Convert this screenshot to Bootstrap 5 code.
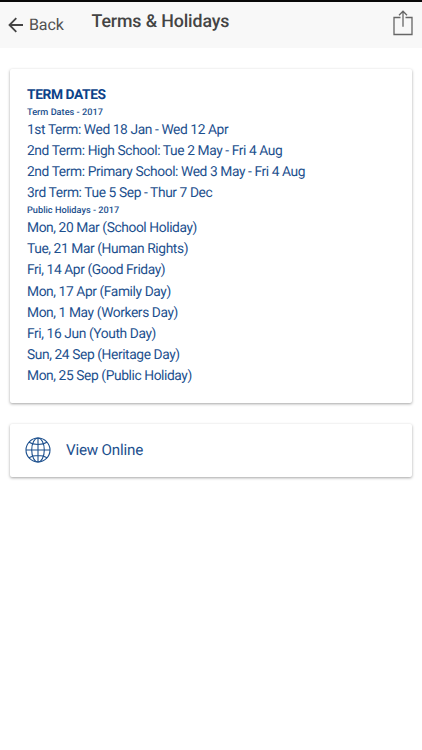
<!DOCTYPE html>
<html lang="en">
<head>
<meta charset="utf-8">
<meta name="viewport" content="width=device-width, initial-scale=1">
<title>Terms &amp; Holidays</title>
<link href="https://cdn.jsdelivr.net/npm/bootstrap@5.3.0/dist/css/bootstrap.min.css" rel="stylesheet">
<style>
body { font-family: Roboto, sans-serif; color: #1d508e; background: #fff; font-size: 13.8px; letter-spacing: -.41px; text-rendering: geometricPrecision; }
.app-bar { height: 48px; background: #f8f8f8; border-top: 2px solid #090909; color: #444; padding: 0 9px 0 8px; }
.back-link { font-size: 16px; line-height: 20px; color: #505050; gap: 6px; width: 83.5px; padding-bottom: 1px; letter-spacing: -.1px; }
.bar-title { font-size: 17.8px; line-height: 22px; font-weight: 500; padding-bottom: 7px; letter-spacing: -.12px; }
.panel { border: 0; border-radius: 2px; color: inherit; box-shadow: 0 1px 3px rgba(0,0,0,.36); }
.content { padding: 21px 10px; gap: 21px; }
.term-panel { height: 334px; padding: 15.6px 17px; }
.term-panel h2 { font-size: 13.8px; line-height: 21.17px; font-weight: 700; color: #0b4289; }
.term-panel h3 { font-size: 9.2px; line-height: 13.8px; font-weight: 500; letter-spacing: 0; }
.term-panel li { line-height: 21.17px; white-space: nowrap; }
.online-panel { height: 53px; padding: 0 15px 1px; gap: 15px; font-size: 15.2px; letter-spacing: -.2px; }
</style>
<script src="https://cdn.jsdelivr.net/npm/bootstrap@5.3.0/dist/js/bootstrap.bundle.min.js"></script>
</head>
<body>
<header class="app-bar d-flex align-items-center">
  <a href="#" class="back-link d-flex align-items-center text-decoration-none">
    <svg width="15" height="16" viewBox="0 0 15 16" fill="none" stroke="#444" stroke-width="1.8"><path d="M15 8H1.8M8.3 1.2L1.500 8l6.800 6.800"/></svg>
    <span>Back</span>
  </a>
  <h1 class="bar-title mb-0">Terms &amp; Holidays</h1>
  <a href="#" class="ms-auto d-flex pb-1" aria-label="Share">
    <svg width="20" height="26" viewBox="0 0 20 26" fill="none" stroke="#666" stroke-width="1.3"><path d="M7.500 7.500H1V24.500h18V7.500h-6.500M10 16.700V1.500M6 5.200l4-4 4 4"/></svg>
  </a>
</header>
<main class="content d-flex flex-column">
  <section class="card panel term-panel">
    <h2 class="mb-0">TERM DATES</h2>
    <h3 class="mb-0">Term Dates - 2017</h3>
    <ul class="list-unstyled mb-0">
      <li>1st Term: Wed 18 Jan - Wed 12 Apr</li>
      <li>2nd Term: High School: Tue 2 May - Fri 4 Aug</li>
      <li>2nd Term: Primary School: Wed 3 May - Fri 4 Aug</li>
      <li>3rd Term: Tue 5 Sep - Thur 7 Dec</li>
    </ul>
    <h3 class="mb-0">Public Holidays - 2017</h3>
    <ul class="list-unstyled mb-0">
      <li>Mon, 20 Mar (School Holiday)</li>
      <li>Tue, 21 Mar (Human Rights)</li>
      <li>Fri, 14 Apr (Good Friday)</li>
      <li>Mon, 17 Apr (Family Day)</li>
      <li>Mon, 1 May (Workers Day)</li>
      <li>Fri, 16 Jun (Youth Day)</li>
      <li>Sun, 24 Sep (Heritage Day)</li>
      <li>Mon, 25 Sep (Public Holiday)</li>
    </ul>
  </section>
  <a href="#" class="card panel online-panel d-flex flex-row align-items-center text-decoration-none">
    <svg width="26" height="26" viewBox="0 0 26 26" fill="none" stroke="currentColor" stroke-width="1.1"><circle cx="13" cy="13" r="12"/><ellipse cx="13" cy="13" rx="6.3" ry="12"/><path d="M13 1v24M1 13h24M4 5.2c4.5 3 13.500 3 18 0M4 20.800c4.500-3 13.500-3 18 0"/></svg>
    <span>View Online</span>
  </a>
</main>
</body>
</html>
